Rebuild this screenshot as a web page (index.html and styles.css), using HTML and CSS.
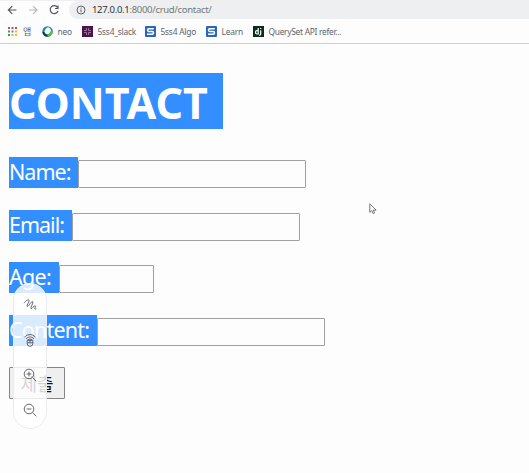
FILE: index.html
```
<!DOCTYPE html>
<html lang="ko">
<head>
<meta charset="utf-8">
<title>Contact</title>
<link rel="stylesheet" href="styles.css">
</head>
<body>
<header class="browser">
  <div class="toolbar">
    <svg class="nav" viewBox="0 0 12 12"><path d="M10.4 6H2.4M6.2 2.2L2.4 6l3.8 3.8"/></svg>
    <svg class="nav muted" viewBox="0 0 12 12"><path d="M2 6h8M6.2 2.2L10 6 6.2 9.8"/></svg>
    <svg class="nav" viewBox="0 0 12 12"><path d="M9.5 3.3A4 4 0 1 0 10 7M10 1.5v3H7"/></svg>
    <div class="address">
      <svg class="info" viewBox="0 0 10 10"><circle cx="5" cy="5" r="4"/><path d="M5 4.4v2.8M5 2.7v1"/></svg>
      <span class="url"><b>127.0.0.1</b>:8000/crud/contact/</span>
    </div>
  </div>
  <nav class="bookmarks">
    <a class="bookmark apps"><svg viewBox="0 0 11 11"><path fill="#e5443a" d="M1 1h2v2H1zM4.5 1h2v2h-2zM8 1h2v2H8z"/><path fill="#35a357" d="M1 4.5h2v2H1z"/><path fill="#4285f4" d="M4.5 4.5h2v2h-2z"/><path fill="#efb52c" d="M8 4.5h2v2H8zM4.5 8h2v2h-2zM8 8h2v2H8z"/><path fill="#35a357" d="M1 8h2v2H1z"/></svg><span>앱</span></a>
    <a class="bookmark neo"><svg viewBox="0 0 11 11"><circle cx="5.5" cy="5.5" r="5.2" fill="#1685ad"/><path fill="#59bd45" d="M5 10.7A5.2 5.2 0 0 0 10.5 4L8 5z"/><path fill="#073d55" d="M.4 6A5.2 5.2 0 0 0 6 10.7L3 6z"/><ellipse cx="5.7" cy="4.8" rx="2.8" ry="3.5" transform="rotate(35 5.7 4.8)" fill="#f4fbfc"/></svg><span>neo</span></a>
    <a class="bookmark slack"><svg viewBox="0 0 11 11"><path fill="#4a154b" d="M0 0h11v11H0z"/><path d="M4.5 2v2.5H2M6.5 2v2.5H9M4.5 9V6.5H2M6.5 9V6.5H9" fill="none" stroke="#a47ba9" stroke-width=".9"/></svg><span>5ss4_slack</span></a>
    <a class="bookmark algo"><svg viewBox="0 0 11 11"><rect width="11" height="11" rx="1" fill="#2866bd"/><path d="M8.8 2.8H3.7Q2.5 2.8 2.5 4t1.2 1.4h3.6Q8.5 5.5 8.5 6.8T7.3 8.3H2" fill="none" stroke="#fff" stroke-width="1.5"/></svg><span>5ss4 Algo</span></a>
    <a class="bookmark learn"><svg viewBox="0 0 11 11"><rect width="11" height="11" rx="1" fill="#2866bd"/><path d="M8.8 2.8H3.7Q2.5 2.8 2.5 4t1.2 1.4h3.6Q8.5 5.5 8.5 6.8T7.3 8.3H2" fill="none" stroke="#fff" stroke-width="1.5"/></svg><span>Learn</span></a>
    <a class="bookmark django"><svg viewBox="0 0 11 11"><path fill="#092e20" d="M0 0h11v11H0z"/><path d="M5.2 2v6H4Q2.5 8 2.5 6.3T4 4.6h1.2M7.7 4.2v3.6q0 1.3-1.5 1.6M7.7 2v1.1" fill="none" stroke="#fff" stroke-width="1.2"/></svg><span>QuerySet API refer...</span></a>
  </nav>
</header>
<main>
  <h1><span>CONTACT</span></h1>
  <form>
    <div class="field name"><label for="name">Name:</label><input id="name" type="text"></div>
    <div class="field email"><label for="email">Email:</label><input id="email" type="text"></div>
    <div class="field age"><label for="age">Age:</label><input id="age" type="text"></div>
    <div class="field content"><label for="content">Content:</label><input id="content" type="text"></div>
    <button type="button">제출</button>
  </form>
</main>
<aside class="tools">
  <svg viewBox="0 0 14 14"><path d="M1 5.2C2.6 3 5.2 1 6 2.2S3 7.6 4.2 8.3C5.6 9 8.4 2.6 9.7 3.7S6.8 9.6 8 10.6c1.2.8 3-3.6 4.3-2.8 1 .7-1.2 2.3-.3 3.2q.6.5 1.3-.2"/></svg>
  <svg viewBox="0 0 14 14"><path d="M1.5 4Q7-1 12.5 4M3 5.7Q7 2 11 5.7M4.6 7Q7 4.7 9.4 7M4.2 7.4h5.6v3.1a2.8 2.8 0 0 1-5.6 0zM4.2 9.8h5.6M7 7.4v2.4"/></svg>
  <svg viewBox="0 0 14 14"><circle cx="6" cy="6" r="4.8"/><path d="M9.4 9.4L13.3 13.3M3.6 6h4.8M6 3.6v4.8"/></svg>
  <svg viewBox="0 0 14 14"><circle cx="6" cy="6" r="4.8"/><path d="M9.4 9.4L13.3 13.3M3.6 6h4.8"/></svg>
</aside>
<svg class="cursor" viewBox="0 0 8 12"><path d="M.8.8v8.6l2-1.8 1.3 3 1.5-.7-1.3-2.8h2.8z" fill="#fff" stroke="#555" stroke-width=".8"/></svg>
</body>
</html>
```
FILE: styles.css
```
* { box-sizing: border-box; }
body {
  margin: 0;
  height: 473px;
  overflow: hidden;
  background: #fdfdfd;
  font-family: "Noto Sans", "Noto Sans CJK KR", sans-serif;
}
.browser { height: 44px; border-bottom: 1px solid #cfd0d1; }
.toolbar { display: flex; align-items: center; height: 19px; padding-left: 6px; border-top: 1px solid #eee; }
.nav { width: 12px; height: 12px; margin-right: 9px; fill: none; stroke: #55585c; stroke-width: 1.2; }
.muted { stroke: #b5b6b8; }
.address {
  flex: 1;
  display: flex;
  align-items: center;
  height: 18px;
  padding-left: 7px;
  border-radius: 9px 0 0 9px;
  background: #eeeff0;
}
.info { width: 10px; height: 10px; fill: none; stroke: #5f6368; }
.url { margin-left: 6px; font-size: 9.5px; line-height: 18px; letter-spacing: -.31px; color: #74777b; white-space: nowrap; }
.url b { font-weight: 400; color: #303236; }
.bookmarks { display: flex; height: 24px; padding-left: 7px; }
.bookmark { display: flex; align-items: center; flex: none; font-size: 8.4px; letter-spacing: -.22px; color: #606368; white-space: nowrap; }
.bookmark svg { width: 11px; height: 11px; margin-right: 5px; }
.apps { width: 34.5px; }
.apps span { font-size: 9px; }
.neo { width: 40px; }
.slack { width: 63px; }
.algo { width: 61px; }
.learn { width: 47px; }
.django { letter-spacing: -.28px; }
main { padding: 29px 0 0 9px; }
h1 {
  width: 214px;
  height: 56px;
  margin: 0 0 28px;
  background: #338fff;
  color: #fff;
  font-size: 43px;
  line-height: 60px;
  white-space: nowrap;
}
.field { display: flex; align-items: flex-end; height: 31px; margin-bottom: 21.6px; }
label { height: 31px; background: #338fff; color: #fff; font-size: 21.5px; line-height: 30px; letter-spacing: -1px; white-space: nowrap; }
.name label { width: 69px; }
.email label { width: 62.5px; }
.age label { width: 50px; letter-spacing: -.7px; }
.content label { width: 88px; letter-spacing: -.8px; }
input { width: 228px; height: 28px; padding: 0; border: 1px solid #a0a0a0; border-radius: 1px; background: #fdfdfd; }
.age input { width: 95px; }
button {
  display: block;
  width: 56px;
  height: 32px;
  padding: 0;
  border: 1px solid #858585;
  border-radius: 1px;
  background: #efefef;
  color: #111;
  font: 18px/28px "Noto Sans CJK KR", sans-serif;
}
.tools {
  position: absolute;
  left: 13px;
  top: 283px;
  width: 34px;
  height: 146px;
  padding: 14px 0 11px;
  display: flex;
  flex-direction: column;
  align-items: center;
  justify-content: space-between;
  border: 1px solid #e9ebed;
  border-radius: 17px;
  background: rgba(255, 255, 255, .82);
}
.tools svg { width: 14px; height: 14px; fill: none; stroke: #50555b; stroke-width: .9; }
.cursor { position: absolute; left: 369px; top: 203px; width: 8px; height: 12px; }
```
